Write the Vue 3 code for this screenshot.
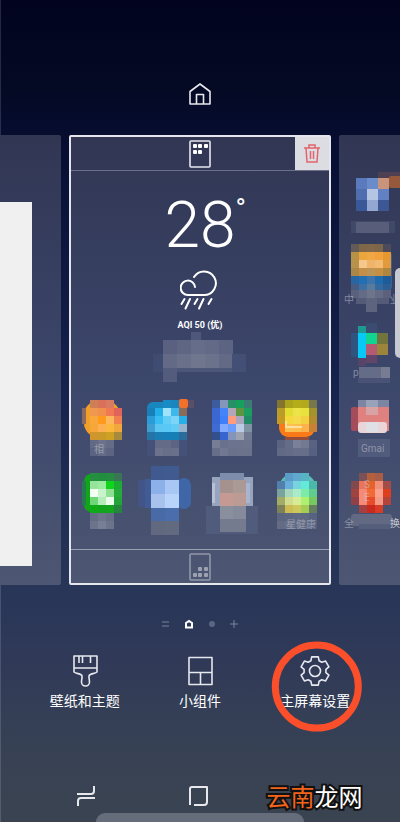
<script setup>
import { ref } from "vue";

// turns rows of colours into square tiles, "-" leaves a hole
const tiles = (x, y, size, rows) =>
  rows.flatMap((row, r) =>
    row.split(" ").map((fill, c) => ({ x: x + c * size, y: y + r * size, w: size, h: size, fill }))
  ).filter((t) => t.fill !== "-");

const box = (x, y, w, h, fill, rx = 0) => ({ x, y, w, h, fill, rx });

//Apps on the home page
const homeApps = ref([
  {
    tiles: [
      box(14, 7, 36, 36, "#f0a028", 14),
      ...tiles(12, 6, 8, [
        "- #cf7f58 #d9705a #d97a62 -",
        "- #ee9850 #f0904a #f07852 #e0645a",
        "- #f8a83c #ff9a1c #fdb75c #f0804e",
        "- #f7a63a #fcb052 #fcb83c #f0a83c",
        "- #d0952c #c99a28 #d0a024 #a88a3c",
      ]),
      box(12, 14, 4, 16, "#8a6a60"),
      ...tiles(20, 46, 8, ["#626982 #6c728a #656c86", "#5b6380 #646b86 #5c6482"]),
    ],
    texts: [{ x: 24, y: 59, s: "相" }],
  },
  {
    tiles: [
      box(12, 8, 40, 37, "#1886bf", 6),
      ...tiles(12, 6, 8, [
        "- - #178bc4 #1a86bd -",
        "#1880b8 #24aee8 #a0e2fc #3cb8ec #8a6a58",
        "#2a9cd6 #38bdf3 #62cdf6 #7cd4f6 #28aee8",
        "#3e9fd0 #5cc6f2 #58c8f6 #62ccf5 #96b4d0",
        "#2474a8 #1a7db3 #177fb8 #187fb6 #2a6c9c",
      ]),
      box(44, 5, 9, 9, "#f2702a", 2),
      box(53, 6, 6, 8, "#5b4f66"),
      ...tiles(20, 46, 8, ["#646b86 #646b86 #5b6482", "#6d738b #687089 #68708a"]),
      box(12, 46, 8, 16, "#46517a"),
      box(44, 46, 8, 16, "#46517a"),
    ],
  },
  {
    tiles: [
      box(12, 7, 40, 38, "#3769d2", 10),
      ...tiles(12, 6, 8, [
        "#3d5c9e #8596bb #279067 #15a05c #3a7b74",
        "#3b68d0 #4484f8 #b3a6b8 #5c9440 #1c9c60",
        "#3b68d0 #3f7ffa #ff9c7c #a8a5bd #238a68",
        "#3f6bd2 #82aaff #6c9cfb #bccbe8 #7f93a2",
        "#34508c #3764cf #8494bb #9ca2af #6e7890",
      ]),
      ...tiles(12, 46, 8, ["#767d95 #6a718c #6b738e #6b738d #6d758e", "#666e8a #727891 #6a718b #6a728c #6a728c"]),
    ],
  },
  {
    tiles: [
      box(14, 8, 36, 35, "#fb7a18", 9),
      ...tiles(12, 6, 8, [
        "#84742e #aaa41c #b4ac18 #b3a91c #77764c",
        "#bc9c28 #e2dc32 #ece24a #e8e23c #a4922c",
        "#c49a24 #f4d83c #f4da4c #f2d040 #b38c2e",
        "- #fbc054 #fdbd4c #fcb24a #c88034",
      ]),
      box(20, 27, 2, 6, "#fde0a0"),
      box(20, 32, 17, 2, "#fde0a0"),
      box(20, 43, 24, 3, "#954c38"),
      ...tiles(12, 46, 8, ["#5b6381 #646c88 #7a8097 #727991 #596281", "#616985 #646b87 #666e89 #666e88 #566080"]),
    ],
  },
  {
    tiles: [
      box(14, 7, 37, 38, "#12a51c", 7),
      ...tiles(12, 6, 8, [
        "- #248f40 #208e3c #268c42 #3a7656",
        "- #96e49c #9aeaa0 #10d41c #1cac34",
        "- #f4fff4 #c8f4cc #8edf94 #26aa3a",
        "- #6ed878 #b4edb8 #eafcec #22a438",
        "- #0faa18 #12a41c #14a51e #24863c",
      ]),
      box(12, 14, 4, 24, "#267950"),
      ...tiles(20, 46, 8, ["#636b85 #6c738b #656d87", "#6c748c #787f94 #6c748c"]),
    ],
  },
  {
    tiles: [
      box(3, 13, 13, 27, "#435588"),
      box(10, 12, 8, 29, "#415c94"),
      box(42, 11, 14, 31, "#3f66a6", 7),
      ...tiles(16, -1, 14, ["#405a8f #405b90"]),
      ...tiles(16, 13, 14, ["#8bb0ea #a8c7f5", "#a9c2ed #b9d4fa", "#486ba8 #4a6eac"]),
      ...tiles(16, 54, 14, ["#61687f #626a80"]),
    ],
  },
  {
    tiles: [
      box(12, 10, 41, 30, "#98a3bd"),
      box(20, 6, 24, 8, "#7f8dac"),
      box(6, 39, 52, 28, "#515b7b"),
      box(12, 16, 3, 20, "#b6c1d8"),
      box(46, 16, 4, 20, "#a9b5ce"),
      ...tiles(20, 13, 13, ["#a5928f #ab9996", "#c49a92 #bb9b94", "#898f9d #858b9a", "#747b8e #747b8e"]),
    ],
  },
  {
    tiles: [
      box(14, 7, 37, 38, "#5cbcb8", 14),
      ...tiles(12, 6, 8, [
        "- #5a9bc8 #5ea9cd #56b4c4 -",
        "#527fac #68aedb #76d4dd #64ead8 #4cb8a8",
        "#7aa39d #a4d7bb #aaecca #7ceaa8 #60cc90",
        "#a3ac66 #d0dc90 #d8ec98 #aef070 #78c862",
        "#7f8158 #cdbc54 #ccc85c #a5cc54 #667e60",
      ]),
      ...tiles(12, 46, 8, ["#5b6480 #5e6782 #616a84 #5f6882 #576180", "#646c85 #686f88 #626a84 #5d6681 #566080"]),
    ],
    texts: [{ x: 21, y: 61, s: "星健康" }],
  },
]);

//Apps on the page to the right
const nextApps = ref([
  {
    tiles: [
      box(39, -3, 22, 6, "#4f3f52"),
      box(50, 1, 14, 12, "#96593c", 2),
      ...tiles(17, 3, 11, ["#5a7abd #6b8ccb #c9937c", "#4e6eaf #b6c4e3 #6181c4", "#3a5798 #93a7d0 #3b5894"]),
      box(12, 46, 44, 12, "#414969"),
      box(17, 47, 33, 11, "#585e79"),
    ],
  },
  {
    tiles: [
      box(12, 4, 41, 38, "#3a5f93", 4),
      ...tiles(12, -4, 8, [
        "#625b57 #7d6748 #80694a #7c6548 #4c4b5c",
        "#b79246 #eaa53c #f0a844 #f2a23c #e69730",
        "#b8924a #f5c78a #efb468 #f3ba74 #e39a3c",
        "#aa8746 #c68f48 #bd9458 #c58f44 #b0863f",
        "#2865a2 #236fb4 #3d75ab #206aae #1e5c99",
        "#485b82 #3c6fa4 #5a7b9d #356aa0 #2d5f95",
      ]),
      ...tiles(12, 42, 8, ["#59617c #646b84 #6e748a #646b84 #5b617b"]),
      box(27, 50, 11, 14, "#5c647e"),
      box(17, 50, 10, 6, "#535b78"),
      box(38, 50, 12, 6, "#535b78"),
    ],
    texts: [{ x: 5, y: 55, s: "中" }, { x: 51, y: 55, s: "业" }],
  },
  {
    tiles: [
      box(12, 12, 7, 24, "#2d557f"),
      box(19, 5, 8, 8, "#1d998f"),
      box(27, 2, 11, 10, "#3a4c70"),
      box(19, 12, 8, 25, "#08c8f8"),
      box(27, 12, 11, 11, "#12d48f"),
      box(38, 12, 11, 11, "#72743d"),
      box(27, 23, 11, 11, "#b45a72"),
      box(38, 23, 11, 11, "#9c843c"),
      box(19, 37, 8, 8, "#574469"),
      box(27, 34, 11, 8, "#64456a"),
      box(20, 46, 22, 11, "#656c88"),
      box(42, 46, 9, 11, "#777c93"),
      box(19, 57, 32, 5, "#4a5375"),
    ],
    texts: [{ x: 14, y: 55, s: "p" }],
  },
  {
    tiles: [
      box(12, 13, 7, 24, "#a54c5b", 2),
      box(19, 6, 8, 7, "#7c86a3"),
      box(27, 6, 12, 11, "#98a2b8"),
      box(39, 6, 11, 7, "#7c86a3"),
      box(19, 13, 31, 24, "#df817e"),
      box(27, 13, 12, 8, "#d8a3a5"),
      box(19, 28, 29, 11, "#e9d5d8", 3),
      box(27, 28, 12, 10, "#dfe0e6"),
      box(19, 45, 32, 18, "#515b7b"),
    ],
    texts: [{ x: 22, y: 58, s: "Gmai" }],
  },
  {
    tiles: [
      ...tiles(12, 6, 8, [
        "- #7a5156 #b5603c #a95c46 -",
        "#81484e #e8745c #e4622c #f0907a #a34b46",
        "#a0443f #f68a76 #f26a35 #faa08c #dc3e1e",
        "#8e4248 #f58a78 #e84c28 #f49a88 #b2443c",
        "- #a34040 #c82a20 #d83c24 -",
      ]),
      box(12, 47, 41, 12, "#626a83", 3),
      box(20, 57, 32, 5, "#555e7b"),
    ],
    texts: [{ x: 5, y: 60, s: "全" }, { x: 25, y: 21, s: "S" }, { x: 25, y: 34, s: "E" }, { x: 51, y: 60, s: "换" }],
  },
]);

const preview = [
  box(100, 0, 10, 8, "#4e587a"),
  ...tiles(72, 8, 14, ["#596080 #5f6684 #666d8a #636a87 #5c6483", "#636a86 #6a708a #70768e #6b728c #636a86", "#535c7d - - - -"]),
  box(86, 36, 55, 4, "#4b5679"),
  box(141, 22, 14, 18, "#444f76"),
  box(62, 22, 10, 18, "#404b71"),
];
</script>

<template>
  <div class="screen">
    <header class="top">
      <svg width="22" height="22" viewBox="0 0 22 22" class="line">
        <path d="M1 8.500 11 1l10 7.500V21H1z" />
        <path d="M7.500 21V11.500h7V21" />
      </svg>
    </header>

    <main class="pages">
      <section class="page left">
        <div class="blank"></div>
      </section>

      <section class="page current">
        <div class="bar bar-top">
          <svg width="22" height="28" viewBox="0 0 22 28" class="line">
            <rect x="1" y="1" width="20" height="26" rx="1" />
            <g class="dots">
              <rect x="4" y="4" width="4" height="4" rx="1" />
              <rect x="9" y="4" width="4" height="4" rx="1" />
              <rect x="15" y="4" width="4" height="4" rx="1" />
              <rect x="4" y="10" width="4" height="4" rx="1" />
              <rect x="9" y="10" width="4" height="4" rx="1" />
            </g>
          </svg>
          <button class="delete" aria-label="删除">
            <svg width="16" height="19" viewBox="0 0 16 19">
              <path d="M0 4h16M5 4V1h6v3M2 4l1 14h10l1-14M6.500 7v8M9.500 7v8" />
            </svg>
          </button>
        </div>

        <div class="weather">
          <div class="temp">28<span class="degree">°</span></div>
          <svg width="40" height="40" viewBox="0 0 40 40" class="rain">
            <path d="M15 17A7.200 7.200 0 1 0 8 25H24A11.800 11.800 0 1 0 14 7" />
            <path d="m4.500 29-3 5M10 29 5.500 38.500M17.500 29l-3 5M23.500 29 19 38.500M31.500 29l-3 5" />
          </svg>
          <div class="aqi">AQI 50 (优)</div>
          <svg width="218" height="52" viewBox="0 0 218 52" class="preview">
            <rect v-for="(t, i) in preview" :key="i" :x="t.x" :y="t.y" :width="t.w" :height="t.h" :fill="t.fill" />
          </svg>
        </div>

        <div class="apps">
          <svg v-for="(app, n) in homeApps" :key="n" class="app" width="65" height="73" viewBox="0 0 65 73">
            <rect v-for="(t, i) in app.tiles" :key="i" :x="t.x" :y="t.y" :width="t.w" :height="t.h" :rx="t.rx" :fill="t.fill" />
            <text v-for="t in app.texts" :key="t.s" :x="t.x" :y="t.y">{{ t.s }}</text>
          </svg>
        </div>

        <div class="bar bar-bottom">
          <svg width="22" height="28" viewBox="0 0 22 28" class="line">
            <rect x="1" y="1" width="20" height="26" rx="1" />
            <g class="dots">
              <rect x="9" y="14" width="4" height="4" rx="1" />
              <rect x="15" y="14" width="4" height="4" rx="1" />
              <rect x="4" y="20" width="4" height="4" rx="1" />
              <rect x="9" y="20" width="4" height="4" rx="1" />
              <rect x="15" y="20" width="4" height="4" rx="1" />
            </g>
          </svg>
        </div>
      </section>

      <section class="page right">
        <svg v-for="(app, n) in nextApps" :key="n" class="app" width="65" height="73" viewBox="0 0 65 73">
          <rect v-for="(t, i) in app.tiles" :key="i" :x="t.x" :y="t.y" :width="t.w" :height="t.h" :rx="t.rx" :fill="t.fill" />
          <text v-for="t in app.texts" :key="t.s" :x="t.x" :y="t.y" :class="{ strong: t.s == '换' }">{{ t.s }}</text>
        </svg>
      </section>
      <div class="edge"></div>
    </main>

    <div class="pager">
      <svg width="8" height="10" viewBox="0 0 8 10"><path d="M0 3h7M0 7h7" /></svg>
      <svg width="10" height="10" viewBox="0 0 10 10" class="on"><path d="M2 8.500V4L5 2l3 2v4.500z" /></svg>
      <svg width="8" height="10" viewBox="0 0 8 10"><circle cx="4" cy="5" r="3" /></svg>
      <svg width="8" height="10" viewBox="0 0 8 10"><path d="M0 5h8M4 1v8" /></svg>
    </div>

    <div class="actions">
      <button class="action">
        <svg width="32" height="34" viewBox="0 0 32 34" class="line">
          <path d="M5 2h23v16c-2.500 2-7.500 1.500-8 4-.3 2 .5 4 .5 6a4 4 0 0 1-8 0c0-2 .8-4 .5-6C12.500 19.500 7.500 20 5 18zM5 14h23M10 2v7M13.500 2v7M21.500 2v7" />
        </svg>
        <span>壁纸和主题</span>
      </button>
      <button class="action">
        <svg width="32" height="34" viewBox="0 0 32 34" class="line">
          <path d="M5 3.500h23v27H5zM5 18.500h23M16.500 18.500v12" />
        </svg>
        <span>小组件</span>
      </button>
      <button class="action marked">
        <svg width="32" height="34" viewBox="0 0 32 34" class="line">
          <path d="M12.700 2.900H19.300L20.100 6.800 22.800 8.300 26.600 7.100 29.900 12.800 26.900 15.400V18.600L29.900 21.200 26.600 26.900 22.800 25.700 20.100 27.200 19.300 31.100H12.700L11.900 27.200 9.200 25.700 5.400 26.900 2.100 21.200 5.100 18.600V15.400L2.100 12.800 5.400 7.100 9.200 8.300 11.900 6.800z" />
          <circle cx="16" cy="17" r="5.500" />
        </svg>
        <span>主屏幕设置</span>
      </button>
    </div>

    <footer class="nav">
      <button aria-label="最近">
        <svg width="20" height="22" viewBox="0 0 20 22" class="line thick">
          <path d="M1 9h14q3 0 3-3V1M19 13H5q-3 0-3 3v5" />
        </svg>
      </button>
      <button aria-label="主屏幕">
        <svg width="20" height="22" viewBox="0 0 20 22" class="line thick">
          <path d="M2 20V4q0-2 2-2h15v15q0 3-3 3H6" />
        </svg>
      </button>
      <div class="brand"><span>云南</span>龙网</div>
    </footer>
    <div class="handle"></div>
  </div>
</template>

<style>
body {
  background: #394150;
}
</style>

<style scoped>
.screen {
  position: relative;
  min-height: 100vh;
  display: flex;
  flex-direction: column;
  overflow: hidden;
  background: linear-gradient(#02041f 0, #040924 90px, #070f35 160px, #17244f 400px, #273558 580px, #2f3958 650px, #384254 760px, #3a4350 822px);
  color: #fff;
  font-family: Roboto, "Noto Sans CJK SC", sans-serif;
}
.screen::before {
  content: "";
  position: absolute;
  top: 0;
  bottom: 0;
  left: 0;
  width: 1px;
  background: rgba(255, 255, 255, 0.14);
}
button {
  border: 0;
  padding: 0;
  background: none;
  color: inherit;
  font-family: inherit;
  cursor: pointer;
}
svg {
  display: block;
}
.line {
  fill: none;
  stroke: #e6e8ee;
  stroke-width: 1.6;
  stroke-linejoin: round;
}
.thick {
  stroke-width: 2;
}
.line .dots {
  fill: #fff;
  stroke: none;
}
.top {
  display: flex;
  justify-content: center;
  padding: 83px 0 30px;
}

.pages {
  position: relative;
  display: grid;
  grid-template-columns: 1fr 262px 1fr;
  gap: 8px;
}
.page {
  min-width: 0;
  overflow: hidden;
  background: linear-gradient(#313653, #3c476c 55%, #4d5672);
  border-radius: 0 2px 2px 0;
}
.left {
  display: flex;
  padding: 67px 29px 19px 0;
}
.blank {
  flex: 1;
  background: #f0f0f0;
}
.current {
  display: flex;
  flex-direction: column;
  border: 2px solid #e4e6ec;
  border-radius: 2px;
}
.right {
  padding-top: 40px;
  border-radius: 2px 0 0 2px;
}
.edge {
  position: absolute;
  right: 0;
  top: 133px;
  width: 5px;
  height: 90px;
  border-radius: 5px 0 0 5px;
  background: #c6c8d2;
}
.bar {
  display: grid;
  grid-template-columns: 1fr auto 1fr;
  align-items: center;
  height: 33px;
}
.bar .line {
  grid-column: 2;
}
.bar-top {
  border-bottom: 1px solid #6c718a;
}
.bar-bottom {
  margin-top: 9px;
  border-top: 1px solid #9a9fb2;
}
.bar-bottom .line {
  opacity: 0.45;
}
.delete {
  justify-self: end;
  display: flex;
  align-items: center;
  justify-content: center;
  width: 34px;
  height: 33px;
  background: #dcdde3;
}
.delete svg {
  fill: none;
  stroke: #e2646c;
  stroke-width: 1.5;
}

.weather {
  display: flex;
  flex-direction: column;
  align-items: center;
  height: 223px;
  box-sizing: border-box;
  padding-top: 20px;
}
.temp {
  position: relative;
  height: 79px;
  line-height: 70px;
  font-size: 64px;
  font-weight: 300;
}
.degree {
  position: absolute;
  left: 100%;
  top: 0;
  font-size: 28px;
  line-height: 36px;
  font-weight: 400;
}
.rain {
  fill: none;
  stroke: #fff;
  stroke-width: 2;
  stroke-linecap: round;
}
.aqi {
  margin-top: 8px;
  font-size: 9px;
  line-height: 14px;
  font-weight: 700;
}
.apps {
  display: grid;
  grid-template-columns: repeat(4, 65px);
  justify-content: center;
}
.app {
  overflow: visible;
}
.app text {
  fill: #c9cdd8;
  font-size: 10px;
  opacity: 0.5;
}
.app .strong {
  opacity: 1;
}

.pager {
  display: flex;
  justify-content: center;
  align-items: center;
  gap: 14px;
  padding: 34px 0 25px;
}
.pager svg {
  fill: none;
  stroke: #7a829c;
}
.pager .on {
  stroke: #fff;
  stroke-width: 2;
}
.pager circle {
  fill: #5c6684;
  stroke: none;
}

.actions,
.nav {
  display: grid;
  grid-template-columns: repeat(3, 1fr);
  padding: 0 27px;
}
.action {
  position: relative;
  display: flex;
  flex-direction: column;
  align-items: center;
  gap: 3px;
  font-size: 14px;
  line-height: 20px;
  white-space: nowrap;
}
.marked::after {
  content: "";
  position: absolute;
  left: 50%;
  top: 50%;
  width: 76px;
  height: 76px;
  border: 7px solid #fb4f2b;
  border-radius: 50%;
  transform: translate(-48%, -46%);
}
.nav {
  grid-template-columns: 118fr 106fr 127fr;
  align-items: center;
  padding: 69px 22px 0 27px;
}
.nav button {
  display: flex;
  justify-content: center;
}
.brand {
  text-align: center;
  font-family: "Noto Sans CJK SC", sans-serif;
  font-size: 24px;
  line-height: 32px;
  font-weight: 400;
  white-space: nowrap;
  -webkit-text-stroke: 4px #111;
  paint-order: stroke fill;
}
.brand span {
  color: #f2641c;
}
.handle {
  position: absolute;
  left: 24%;
  right: 24%;
  bottom: 0;
  height: 9px;
  border-radius: 12px 12px 0 0;
  background: #656d7a;
}
</style>
